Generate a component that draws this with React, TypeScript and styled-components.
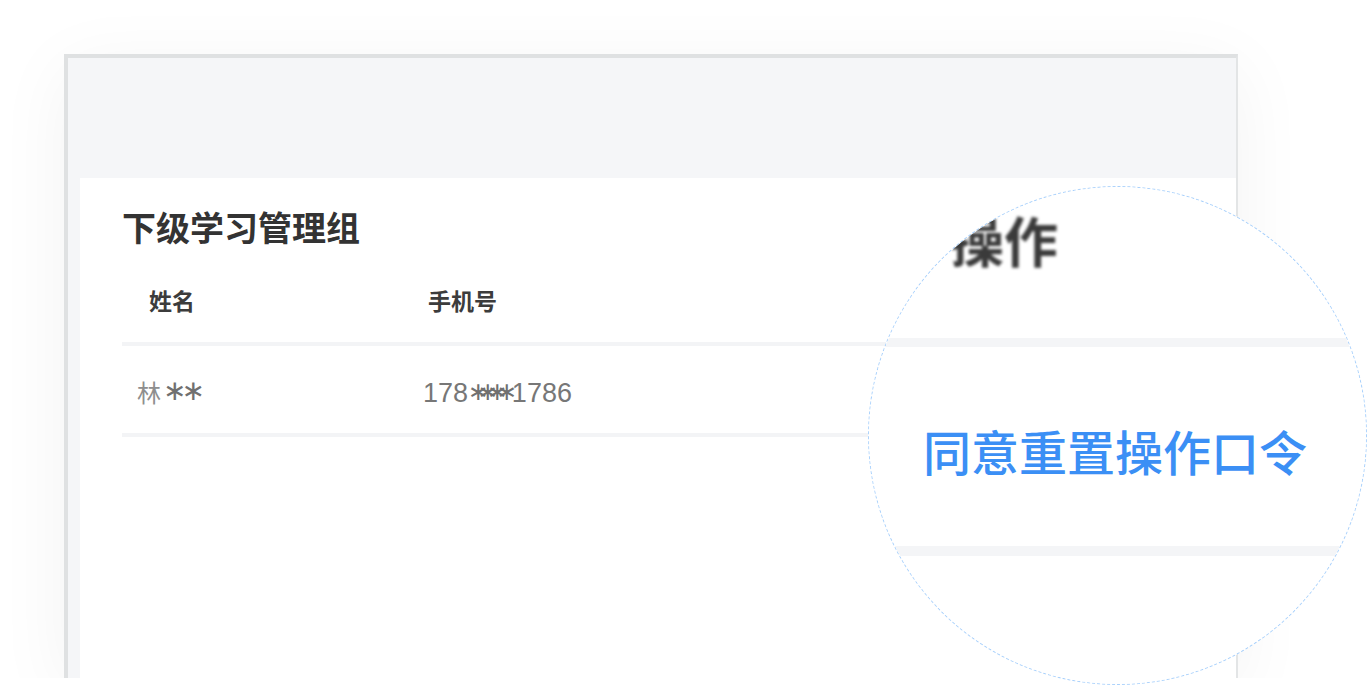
import React from "react";
import styled, { createGlobalStyle } from "styled-components";

const GlobalStyle = createGlobalStyle`
  html, body {
    margin: 0;
    padding: 0;
    background: #ffffff;
  }
  body {
    font-family: "Noto Sans CJK SC", "Noto Sans", sans-serif;
    overflow: hidden;
  }
  * { box-sizing: border-box; }
`;

const Scene = styled.div`
  position: relative;
  width: 1368px;
  height: 686px;
  background: #ffffff;
`;

const ClipArea = styled.div`
  height: 678px;
  overflow: hidden;
  padding: 54px 0 0 64px;
`;

const Frame = styled.div`
  width: 1174px;
  height: 624px;
  display: flex;
  flex-direction: column;
  background: #f5f6f8;
  border-top: 4px solid #dfe1e2;
  border-left: 4px solid #dfe1e2;
  border-right: 2px solid #e3e5e6;
  box-shadow: 0 14px 70px rgba(0, 0, 0, 0.05);
  padding: 120px 0 0 12px;
`;

const Panel = styled.div`
  flex: 1;
  background: #ffffff;
  padding: 32px 42px 0 42px;
`;

const Title = styled.h2`
  margin: 0;
  font-family: "Noto Sans CJK SC", sans-serif;
  font-size: 34px;
  line-height: 34px;
  font-weight: 700;
  color: #333333;
`;

const Row = styled.div<{ $head?: boolean }>`
  display: grid;
  grid-template-columns: 280px 1fr;
  align-items: center;
  height: ${(p) => (p.$head ? "102px" : "91px")};
  padding-top: ${(p) => (p.$head ? "14px" : "5px")};
  border-bottom: 4px solid #f3f4f6;
`;

const HeadCell = styled.div<{ $pad: number }>`
  padding-left: ${(p) => p.$pad}px;
  font-family: "Noto Sans CJK SC", sans-serif;
  font-size: 23px;
  line-height: 23px;
  font-weight: 700;
  color: #3c3c3c;
`;

const Cell = styled.div<{ $pad: number }>`
  padding-left: ${(p) => p.$pad}px;
  font-family: "Liberation Sans", "Noto Sans CJK SC", sans-serif;
  font-size: 27px;
  line-height: 27px;
  font-weight: 400;
  color: #777777;
  white-space: nowrap;
`;

const NameChar = styled.span`
  font-size: 24px;
  color: #8e8e8e;
  font-family: "Noto Sans CJK SC", sans-serif;
`;

const Stars = styled.span<{ $size: number; $gap: number; $before: number; $after: number }>`
  font-family: "DejaVu Sans", sans-serif;
  font-size: ${(p) => p.$size}px;
  letter-spacing: ${(p) => p.$gap}px;
  margin-left: ${(p) => p.$before}px;
  margin-right: ${(p) => p.$after}px;
  vertical-align: 0.06em;
  color: #707070;
`;

const Magnifier = styled.div`
  position: absolute;
  left: 868px;
  top: 186px;
  width: 499px;
  height: 499px;
  border-radius: 50%;
  border: 1.5px dashed #a9d1fc;
  background: #ffffff;
  overflow: hidden;
  display: flex;
  flex-direction: column;
`;

const MagHead = styled.div`
  height: 151px;
  padding: 26px 0 0 81px;
`;

const MagHeadText = styled.span`
  display: inline-block;
  font-family: "Noto Sans CJK SC", sans-serif;
  font-size: 54px;
  line-height: 54px;
  font-weight: 700;
  color: #3a3a3a;
  filter: blur(1.4px);
`;

const MagDivider = styled.div<{ $h: number }>`
  height: ${(p) => p.$h}px;
  background: #f4f5f7;
  flex-shrink: 0;
`;

const MagRow = styled.div`
  height: 199px;
  display: flex;
  align-items: center;
  padding: 6px 0 0 54px;
`;

const ActionLink = styled.span`
  font-family: "Noto Sans CJK SC", sans-serif;
  font-size: 48px;
  line-height: 48px;
  font-weight: 500;
  color: #3b8ff5;
  white-space: nowrap;
`;

export default function App() {
  return (
    <>
      <GlobalStyle />
      <Scene>
        <ClipArea>
          <Frame>
            <Panel>
              <Title>下级学习管理组</Title>
              <Row $head>
                <HeadCell $pad={27}>姓名</HeadCell>
                <HeadCell $pad={26}>手机号</HeadCell>
              </Row>
              <Row>
                <Cell $pad={15}>
                  <NameChar>林</NameChar>
                  <Stars $size={28} $gap={-5} $before={2} $after={0}>∗∗</Stars>
                </Cell>
                <Cell $pad={21}>
                  178<Stars $size={25} $gap={-11.5} $before={0} $after={6}>∗∗∗∗</Stars>1786
                </Cell>
              </Row>
            </Panel>
          </Frame>
        </ClipArea>
        <Magnifier>
          <MagHead>
            <MagHeadText>操作</MagHeadText>
          </MagHead>
          <MagDivider $h={9} />
          <MagRow>
            <ActionLink>同意重置操作口令</ActionLink>
          </MagRow>
          <MagDivider $h={10} />
        </Magnifier>
      </Scene>
    </>
  );
}
